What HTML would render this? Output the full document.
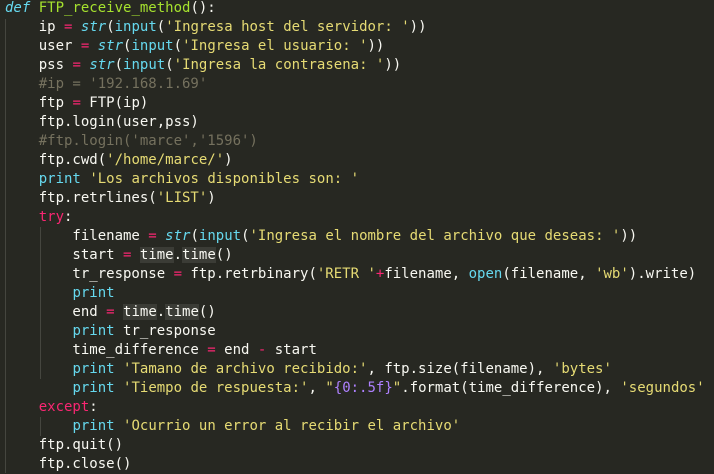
<!DOCTYPE html>
<html><head><style>
html,body{margin:0;padding:0;background:#272822;width:714px;height:473px;overflow:hidden}
pre{margin:0;position:absolute;top:-1px;left:5px;font-family:"DejaVu Sans Mono","Liberation Mono",monospace;font-size:14px;line-height:19px;color:#f8f8f2}
.k{color:#f92672}.c{color:#66d9ef}.i{color:#66d9ef;font-style:italic}.g{color:#a6e22e}.s{color:#e6db74}.m{color:#75715e}.p{color:#ae81ff}
.h{background:#3b3c36}
.gd{position:absolute;width:1px;background:#45463f}
</style></head><body>
<div class="gd" style="left:5px;top:19px;height:454px"></div>
<div class="gd" style="left:40px;top:227px;height:152px"></div>
<div class="gd" style="left:40px;top:417px;height:19px"></div>
<pre><span class="i">def</span> <span class="g">FTP_receive_method</span>():
    ip <span class="k">=</span> <span class="i">str</span>(<span class="c">input</span>(<span class="s">'Ingresa host del servidor: '</span>))
    user <span class="k">=</span> <span class="i">str</span>(<span class="c">input</span>(<span class="s">'Ingresa el usuario: '</span>))
    pss <span class="k">=</span> <span class="i">str</span>(<span class="c">input</span>(<span class="s">'Ingresa la contrasena: '</span>))
    <span class="m">#ip = '192.168.1.69'</span>
    ftp <span class="k">=</span> FTP(ip)
    ftp.login(user,pss)
    <span class="m">#ftp.login('marce','1596')</span>
    ftp.cwd(<span class="s">'/home/marce/'</span>)
    <span class="c">print</span> <span class="s">'Los archivos disponibles son: '</span>
    ftp.retrlines(<span class="s">'LIST'</span>)
    <span class="k">try</span>:
        filename <span class="k">=</span> <span class="i">str</span>(<span class="c">input</span>(<span class="s">'Ingresa el nombre del archivo que deseas: '</span>))
        start <span class="k">=</span> <span class="h">time</span>.<span class="h">time</span>()
        tr_response <span class="k">=</span> ftp.retrbinary(<span class="s">'RETR '</span><span class="k">+</span>filename, <span class="c">open</span>(filename, <span class="s">'wb'</span>).write)
        <span class="c">print</span>
        end <span class="k">=</span> <span class="h">time</span>.<span class="h">time</span>()
        <span class="c">print</span> tr_response
        time_difference <span class="k">=</span> end <span class="k">-</span> start
        <span class="c">print</span> <span class="s">'Tamano de archivo recibido:'</span>, ftp.size(filename), <span class="s">'bytes'</span>
        <span class="c">print</span> <span class="s">'Tiempo de respuesta:'</span>, <span class="s">"</span><span class="p">{0:.5f}</span><span class="s">"</span>.format(time_difference), <span class="s">'segundos'</span>
    <span class="k">except</span>:
        <span class="c">print</span> <span class="s">'Ocurrio un error al recibir el archivo'</span>
    ftp.quit()
    ftp.close()
</pre>
</body></html>
